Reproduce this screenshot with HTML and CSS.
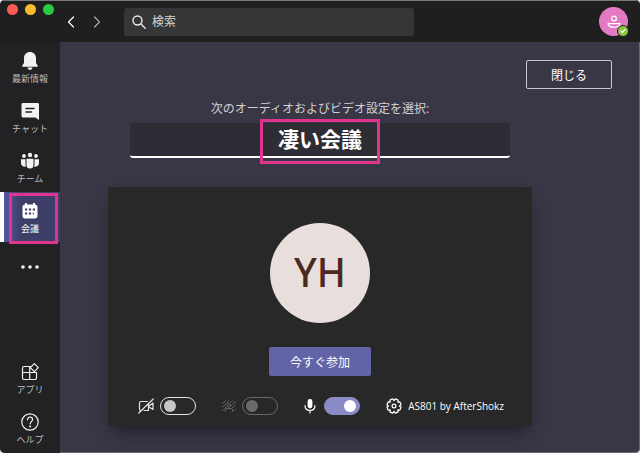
FILE: index.html
```html
<!DOCTYPE html>
<html lang="ja">
<head>
<meta charset="utf-8">
<meta name="viewport" content="width=device-width, initial-scale=1">
<title>会議</title>
<link rel="stylesheet" href="styles.css">
</head>
<body>
<div class="window">
  <header class="topbar">
    <div class="lights"><span class="light red"></span><span class="light yellow"></span><span class="light green"></span></div>
    <nav class="history">
      <button class="icon-button" type="button" aria-label="戻る"><svg width="8" height="12" viewBox="0 0 8 12"><path d="M6.500 1 1.500 6l5 5"/></svg></button>
      <button class="icon-button dim" type="button" aria-label="進む"><svg width="8" height="12" viewBox="0 0 8 12"><path d="m1.500 1 5 5-5 5"/></svg></button>
    </nav>
    <label class="search">
      <svg width="14" height="14" viewBox="0 0 14 14"><circle cx="5.500" cy="5.500" r="4.500"/><path d="m9 9 4.200 4.200"/></svg>
      <input type="search" placeholder="検索" aria-label="検索">
    </label>
    <button class="profile" type="button" aria-label="プロファイル">
      <svg width="14" height="14" viewBox="0 0 14 14"><circle cx="7" cy="3.500" r="2.400"/><path d="M1 8.600h12c0 2.500-2.500 3.700-6 3.700S1 11.100 1 8.600Z"/></svg>
      <span class="presence"><svg width="6" height="6" viewBox="0 0 6 6"><path d="m1 3.200 1.300 1.300L5 1.500"/></svg></span>
    </button>
  </header>
  <div class="body">
    <nav class="rail">
      <a class="rail-item" href="#activity">
        <svg width="18" height="20" viewBox="0 0 18 20" class="solid"><path d="M9 1c3.500 0 6 2.600 6 6v5l1.700 2.600c.3.500 0 1.100-.6 1.100H1.900c-.6 0-.9-.6-.6-1.100L3 12V7c0-3.400 2.500-6 6-6ZM6.500 16.500h5a2.500 2.500 0 0 1-5 0Z"/></svg>
        <span>最新情報</span>
      </a>
      <a class="rail-item" href="#chat">
        <svg width="18" height="20" viewBox="0 0 18 20" class="solid"><path d="M2 2h14.500c1 0 1.500.6 1.500 1.500V19l-3.500-2.500H2c-1 0-1.500-.6-1.500-1.500V3.500C.5 2.600 1 2 2 2Z"/><path class="cut" d="M5 7.500h8M5 11h5.500"/></svg>
        <span>チャット</span>
      </a>
      <a class="rail-item" href="#teams">
        <svg width="18" height="20" viewBox="0 0 18 20" class="solid"><circle cx="9" cy="4" r="2.200"/><circle cx="3" cy="5" r="1.900"/><circle cx="15" cy="5" r="1.900"/><path d="M5.500 7.700h7V14a3.500 3.500 0 0 1-7 0ZM0 8.200h4.500V14l.4 1.700C2 16 0 14.300 0 12ZM18 8.200h-4.500V14l-.4 1.700c2.900.3 4.900-1.400 4.900-3.700Z"/></svg>
        <span>チーム</span>
      </a>
      <a class="rail-item active" href="#meetings" aria-current="page">
        <svg width="18" height="20" viewBox="0 0 18 20" class="solid"><path d="M4 2h2v1.500h6V2h2v1.500c1.500 0 2.500 1 2.500 2.500v9c0 1.500-1 2.500-2.500 2.500H4c-1.500 0-2.500-1-2.500-2.500V6c0-1.500 1-2.500 2.500-2.500Z"/><path class="cut dots" d="M7.900 8.500h2.200M11.800 8.500H14M4 12.500h2.200M7.900 12.500h2.200M4 8.500h2.200M11.800 12.500h1"/></svg>
        <span>会議</span>
      </a>
      <button class="rail-item more" type="button" aria-label="その他">
        <svg width="18" height="4" viewBox="0 0 18 4" class="solid"><circle cx="2" cy="2" r="1.800"/><circle cx="9" cy="2" r="1.800"/><circle cx="16" cy="2" r="1.800"/></svg>
      </button>
      <a class="rail-item apps" href="#apps">
        <svg width="18" height="20" viewBox="0 0 18 20"><path d="M9 4.500H3A1.500 1.500 0 0 0 1.500 6v10A1.500 1.500 0 0 0 3 17.500h11a1.500 1.500 0 0 0 1.500-1.500v-5.500h-14M8.700 4.500v13M13.300 1.600l4 4-4 4-4-4Z"/></svg>
        <span>アプリ</span>
      </a>
      <a class="rail-item" href="#help">
        <svg width="18" height="20" viewBox="0 0 18 20"><circle cx="9" cy="10" r="8.200"/><path d="M6.500 7.800c0-1.600 1.100-2.600 2.600-2.600s2.500 1 2.500 2.300c0 2-2.500 2.200-2.500 4.500"/><circle class="dot" cx="9.100" cy="14.400" r="1"/></svg>
        <span>ヘルプ</span>
      </a>
      <span class="highlight rail-mark"></span>
    </nav>
    <main class="stage">
      <button class="close" type="button">閉じる</button>
      <div class="setup">
        <label class="prompt" for="name">次のオーディオおよびビデオ設定を選択:</label>
        <div class="name-field">
          <input id="name" type="text" value="凄い会議">
          <span class="highlight name-mark"></span>
        </div>
        <section class="preview">
          <div class="avatar">YH</div>
          <button class="join" type="button">今すぐ参加</button>
          <div class="devices">
            <label class="device">
              <svg width="16" height="16" viewBox="0 0 16 16"><path d="M9.500 3.500H3A1.500 1.500 0 0 0 1.500 5v6c0 .8.400 1.300 1 1.500M6 12.500h4.500V5.800M11 8l4-3v6.500l-4-2.500M.8 15 15.200 1"/></svg>
              <input type="checkbox" class="toggle" aria-label="カメラ">
            </label>
            <label class="device">
              <svg width="14" height="14" viewBox="0 0 16 16" class="muted"><path d="M1 5l3-3M1 9l7-7M1 13l4-4M10 4l2-2M12 6l3-3M12 10l3-3M14 13l1-1M4 14v-1.500c0-1 .7-1.500 1.500-1.500h5c.8 0 1.500.5 1.500 1.500V14"/><circle cx="8" cy="7.300" r="2"/></svg>
              <input type="checkbox" class="toggle" disabled aria-label="背景効果">
            </label>
            <label class="device mic">
              <svg width="12" height="16" viewBox="0 0 12 16"><rect class="fill" x="3.600" y="1" width="4.800" height="9.500" rx="2.400"/><path d="M1 7.500c0 3.200 2 5 5 5s5-1.800 5-5M6 12.500V15"/></svg>
              <input type="checkbox" class="toggle" checked aria-label="マイク">
            </label>
            <button class="settings" type="button">
              <svg width="16" height="16" viewBox="0 0 16 16"><path d="M13.400 8 15.100 9.300 13.900 12.100 11.800 11.800 12.100 13.900 9.300 15.100 8 13.400 6.700 15.100 3.900 13.900 4.200 11.800 2.100 12.100.9 9.300 2.600 8 .9 6.700 2.100 3.900 4.200 4.200 3.900 2.100 6.700.9 8 2.600 9.300.9 12.100 2.100 11.800 4.200 13.900 3.900 15.100 6.700Z"/><circle cx="8" cy="8" r="1.900"/></svg>
              <span>AS801 by AfterShokz</span>
            </button>
          </div>
        </section>
      </div>
    </main>
  </div>
</div>
</body>
</html>
```
FILE: styles.css
```css
* { box-sizing: border-box; }

body {
  margin: 0;
  background: #e8e8ea;
  color: #fff;
  font-family: "Open Sans", "Noto Sans CJK JP", sans-serif;
  font-size: 12px;
}

button, input { font: inherit; color: inherit; }
button { padding: 0; border: 0; background: none; }
a { color: inherit; text-decoration: none; }

svg {
  display: block;
  flex: none;
  fill: none;
  stroke: currentColor;
  stroke-width: 1.2;
  stroke-linejoin: round;
  stroke-linecap: round;
}

.solid { fill: currentColor; stroke: none; }

.window {
  display: flex;
  flex-direction: column;
  min-height: 100vh;
  overflow: hidden;
  border-radius: 5px;
  background: #393645;
  box-shadow: inset 0 0 0 1px #686870;
}

.topbar {
  display: flex;
  align-items: center;
  height: 42px;
  padding-right: 12px;
  border-top: 1px solid #777;
  background: #201f1f;
}

.lights {
  display: flex;
  align-self: flex-start;
  gap: 7px;
  width: 67px;
  padding: 3px 0 0 7px;
}

.light { width: 11px; height: 11px; border-radius: 50%; }
.red { background: #fc5b57; }
.yellow { background: #fdbc2e; }
.green { background: #28cb41; }

.history { display: flex; gap: 18px; width: 57px; }
.icon-button { color: #fff; }
.dim { color: #aaa; }

.search {
  display: flex;
  align-items: center;
  gap: 6px;
  flex: 0 1 290px;
  height: 28px;
  padding: 0 8px;
  border-radius: 3px;
  background: #363636;
  color: #e8e8e8;
}

.search svg { stroke-width: 1.4; }
.search input {
  flex: 1;
  min-width: 0;
  padding: 0;
  border: 0;
  outline: 0;
  background: none;
}
.search input::placeholder { color: #d4d4d4; opacity: 1; }

.profile {
  position: relative;
  display: grid;
  place-items: center;
  width: 29px;
  height: 29px;
  margin-left: auto;
  border-radius: 50%;
  background: #e57ac4;
}

.presence {
  position: absolute;
  right: -1px;
  bottom: -1px;
  display: grid;
  place-items: center;
  width: 12px;
  height: 12px;
  border: 1px solid #201f1f;
  border-radius: 50%;
  background: #8fc43f;
}

.body { display: flex; flex: 1; }

.rail {
  position: relative;
  display: flex;
  flex-direction: column;
  flex: none;
  width: 60px;
  background: #222123;
}

.rail-item {
  display: flex;
  flex-direction: column;
  align-items: center;
  gap: 1px;
  height: 50px;
  padding-top: 9px;
  color: #f2f2f2;
}

.rail-item span {
  color: #bebebe;
  font-size: 9px;
  line-height: 14px;
}

.rail-item.active {
  border-left: 4px solid #fff;
  padding-right: 4px;
  background: linear-gradient(90deg, #5657a3, #3e3f68 30%);
  color: #fff;
}

.rail-item.active span { color: #fff; }
.rail-item.more { justify-content: center; padding: 0; }
.apps { margin-top: auto; }
.cut { fill: none; stroke: #222123; stroke-width: 1.4; }
.dots { stroke: #3e3f68; stroke-width: 2.2; stroke-linecap: butt; }
.dot { fill: currentColor; stroke: none; }

.highlight {
  position: absolute;
  border: 3px solid #e0348f;
  pointer-events: none;
}

.rail-mark { top: 151px; left: 9px; width: 49px; height: 51px; }

.stage {
  display: flex;
  flex-direction: column;
  flex: 1;
  min-width: 0;
  padding: 18px 28px 27px 0;
}

.close {
  align-self: flex-end;
  width: 86px;
  height: 29px;
  border: 1px solid #c8c7cc;
  border-radius: 2px;
}

.setup {
  display: flex;
  flex-direction: column;
  align-items: center;
  flex: 1;
  padding: 10px 80px 0 48px;
}

.prompt { color: #d2d1d6; line-height: 20px; }

.name-field {
  position: relative;
  width: 100%;
  margin: 4px 0 29px;
  padding: 0 22px;
}

.name-field input {
  display: block;
  width: 100%;
  height: 35px;
  padding: 0 0 4px;
  border: 0;
  border-bottom: 2px solid #fff;
  border-radius: 3px;
  outline: 0;
  background: #2e2d35;
  font-size: 21px;
  font-weight: 700;
  text-align: center;
}

.name-mark {
  top: -4px;
  left: 50%;
  width: 120px;
  height: 45px;
  margin-left: -60px;
}

.preview {
  display: flex;
  flex-direction: column;
  align-items: center;
  flex: 1;
  width: 100%;
  padding: 36px 28px 11px;
  background: #282828;
  box-shadow: 0 10px 16px -6px #1c1a25;
}

.avatar {
  display: grid;
  place-items: center;
  width: 100px;
  height: 100px;
  padding-bottom: 4px;
  border-radius: 50%;
  background: #e8dedb;
  color: #4c2a20;
  font-family: "Noto Sans", "Open Sans", sans-serif;
  font-size: 39px;
  font-weight: 500;
}

.join {
  width: 102px;
  height: 29px;
  margin-top: 24px;
  border-radius: 2px;
  background: #6264a7;
}

.devices {
  display: flex;
  align-items: center;
  justify-content: space-between;
  width: 100%;
  margin-top: auto;
  padding-left: 2px;
}

.device { display: flex; align-items: center; gap: 6px; color: #e4e4e4; }
.mic { gap: 8px; color: #fff; }
.muted { color: #777; stroke-width: 1; }
.fill { fill: currentColor; stroke: none; }

.toggle {
  display: flex;
  align-items: center;
  width: 36px;
  height: 18px;
  margin: 0;
  padding: 0 3px;
  border: 1px solid #e4e4e4;
  border-radius: 9px;
  appearance: none;
}

.toggle::before {
  content: "";
  width: 12px;
  height: 12px;
  border-radius: 50%;
  background: #c8c6c4;
}

.toggle:disabled { border-color: #6c6a69; }
.toggle:disabled::before { background: #6c6a69; }
.toggle:checked { justify-content: flex-end; border-color: #8b8cc7; background: #8b8cc7; }
.toggle:checked::before { background: #fff; }

.settings {
  display: flex;
  align-items: center;
  gap: 6px;
  font-size: 10px;
  white-space: nowrap;
}
```
